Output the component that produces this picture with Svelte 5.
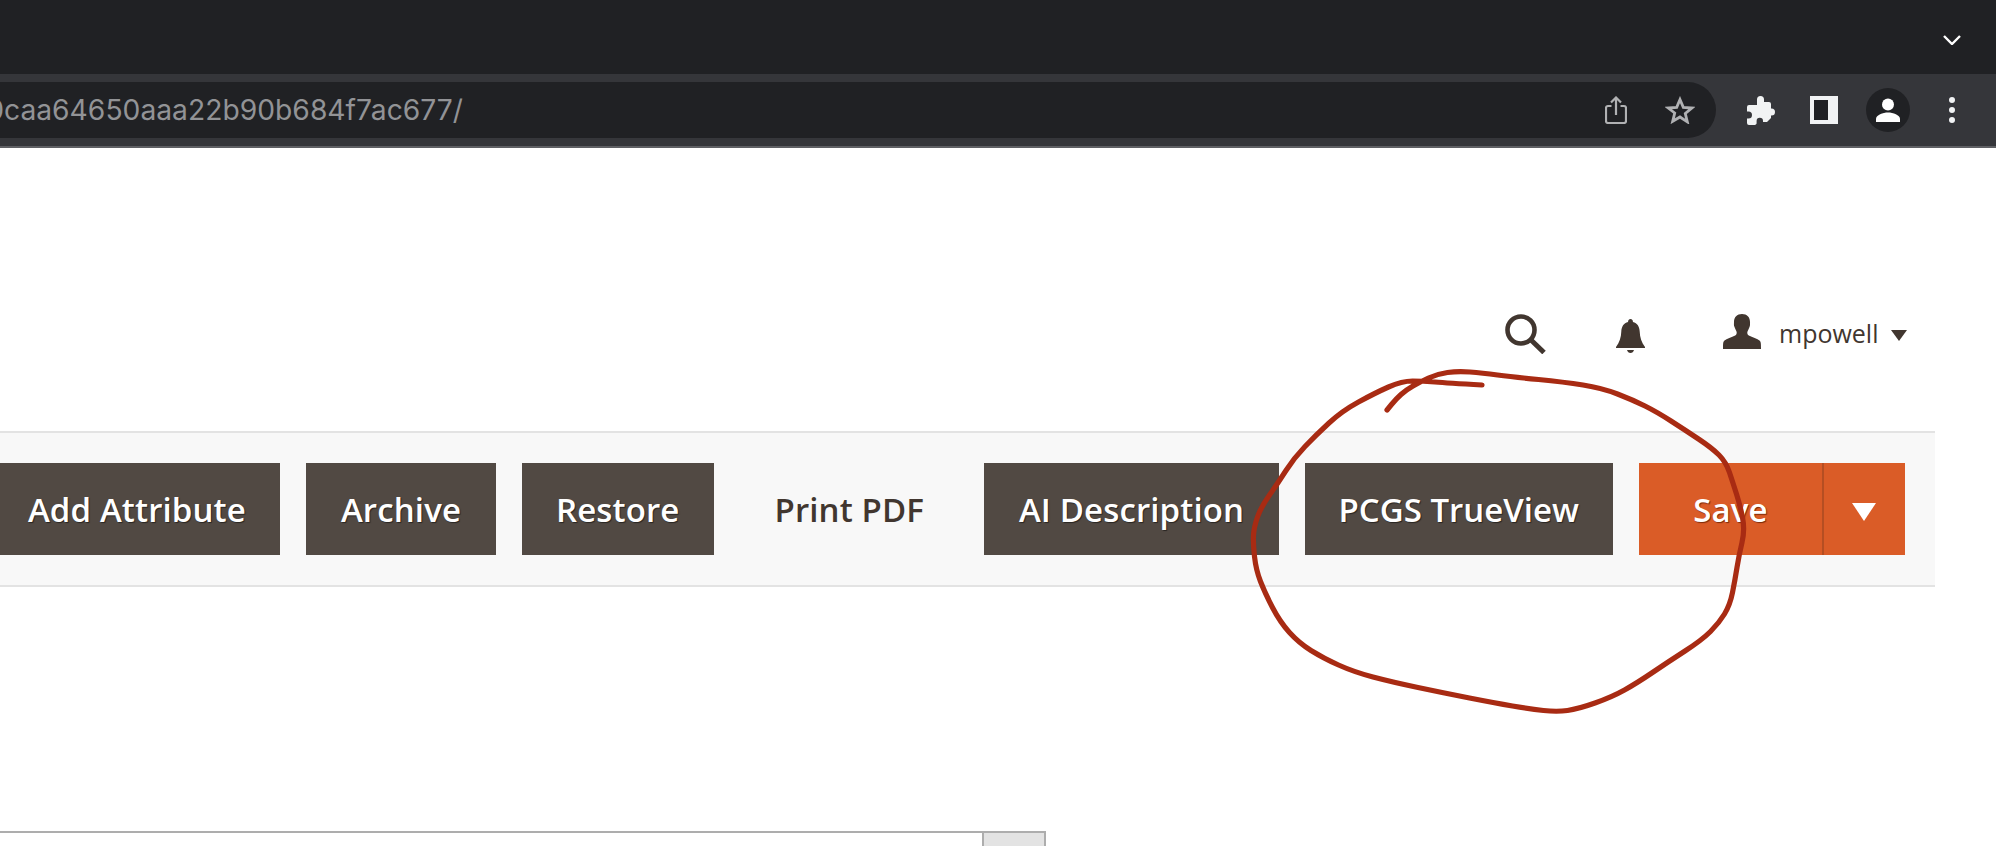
<script>
	// Red freehand circle drawn over the toolbar, in page coordinates
	const pts = [
		[1482,385],[1447,383],[1423,381],[1402,381],[1375,393],[1342,411],[1316,435],[1294,458],[1278,483],
		[1261,507],[1254,527],[1253,543],[1256,570],[1265,593],[1280,622],[1299,643],[1323,658],[1354,672],
		[1392,682],[1444,693],[1495,703],[1530,709],[1557,712],[1578,709],[1612,697],[1637,683],[1668,662],
		[1702,640],[1719,623],[1730,605],[1735,580],[1739,555],[1745,530],[1740,505],[1733,483],[1726,462],
		[1712,448],[1685,430],[1657,412],[1633,400],[1602,388],[1564,382],[1513,377],[1482,373],[1458,371],
		[1437,374],[1420,382],[1406,390],[1396,399],[1387,410]
	];

	function smooth(p) {
		let d = `M${p[0][0]} ${p[0][1]}`;
		for (let i = 1; i < p.length - 1; i++) {
			const mx = (p[i][0] + p[i + 1][0]) / 2;
			const my = (p[i][1] + p[i + 1][1]) / 2;
			d += ` Q${p[i][0]} ${p[i][1]} ${mx} ${my}`;
		}
		const last = p[p.length - 1];
		return d + ` L${last[0]} ${last[1]}`;
	}

	const circle = smooth(pts);
	const actions = ['Add Attribute', 'Archive', 'Restore'];
</script>

<div class="page">
	<div class="tabstrip">
		<svg class="chevron" width="18" height="10" viewBox="0 0 18 10"><path d="M1 1l8 8 8-8" fill="none" stroke="#fff" stroke-width="2.4"/></svg>
	</div>

	<div class="toolbar">
		<div class="omnibox">
			<div class="url"><span>f0caa64650aaa22b90b684f7ac677/</span></div>
			<svg class="share" width="22" height="28" viewBox="0 0 22 28" fill="none" stroke="#b0b1b3" stroke-width="2.2">
				<path d="M6.500 10H3a2 2 0 0 0-2 2v13a2 2 0 0 0 2 2h16a2 2 0 0 0 2-2V12a2 2 0 0 0-2-2h-3.500"/>
				<path d="M11 19V2M6 6.500 11 1.500l5 5"/>
			</svg>
			<svg class="star" width="30" height="28" viewBox="0 0 30 28"><path d="M15 3.500l3.300 7.800 8.500.7-6.500 5.500 2 8.300L15 21l-7.300 4.300 2-8.300L3.200 12l8.500-.7z" fill="none" stroke="#b0b1b3" stroke-width="2.800"/></svg>
		</div>
		<div class="tools">
			<svg class="puzzle" width="29" height="29" viewBox="0 0 29 29"><path d="M11 3.500a3.500 3.500 0 0 1 7 0V6h5a2 2 0 0 1 2 2v4.500h.5a3.500 3.500 0 0 1 0 7H25V22l-4 4h-4v-1a3.200 3.200 0 0 0-6.400 0v2.500a2 2 0 0 1-2 1.500H3a2 2 0 0 1-2-2v-4.500h1.500a3.500 3.500 0 0 0 0-7H1V11a2 2 0 0 1 2-2h8z" fill="#f1f3f4"/></svg>
			<div class="sidepanel"></div>
			<div class="avatar">
				<svg width="26" height="24" viewBox="0 0 26 24" fill="#fff"><circle cx="13" cy="6.500" r="6"/><path d="M1 24v-3c0-4 7-6.500 12-6.500s12 2.500 12 6.500v3z"/></svg>
			</div>
			<div class="dots"><i></i><i></i><i></i></div>
		</div>
	</div>
	<div class="toolbar-edge"></div>

	<header class="admin-user">
		<svg class="search" width="41" height="40" viewBox="0 0 41 40" fill="none" stroke="#41362f"><circle cx="16" cy="16" r="13.500" stroke-width="4.600"/><path d="M25.500 25.500 39 38.500" stroke-width="5"/></svg>
		<svg class="bell" width="29" height="34" viewBox="0 0 29 34" fill="#41362f">
			<path d="M14.500 0a2.500 2.500 0 0 1 2.400 3c4.500 1 6.600 4.800 6.800 9.500.2 6 1.800 11 5.300 15.500v1H0v-1c3.500-4.500 5.100-9.500 5.300-15.500C5.500 7.800 7.600 4 12.100 3a2.500 2.500 0 0 1 2.400-3z"/>
			<path d="M11 31h7c-.6 2-1.800 3-3.500 3S11.600 33 11 31z"/>
		</svg>
		<svg class="user" width="38" height="35" viewBox="0 0 38 35" fill="#41362f"><path d="M19 0c5 0 8 3 8 8 0 2 .3 3-.5 5-.6 1.600-1.300 3-1.900 4.200-.7 1.500-.3 3.300 1.200 4.200 3.500 1.800 8.500 3 11 5.300 1 1 1.200 2.300 1.200 8.300H0c0-6 .2-7.300 1.200-8.300 2.500-2.300 7.500-3.500 11-5.300 1.500-.9 1.900-2.700 1.200-4.200-.6-1.200-1.300-2.600-1.900-4.200-.8-2-.5-3-.5-5 0-5 3-8 8-8z"/></svg>
		<span class="username">mpowell</span>
		<span class="caret"></span>
	</header>

	<div class="actions">
		{#each actions as label}
			<button class="btn">{label}</button>
		{/each}
		<button class="btn plain">Print PDF</button>
		<button class="btn">AI Description</button>
		<button class="btn tight">PCGS TrueView</button>
		<div class="split">
			<button class="btn save">Save</button>
			<button class="btn toggle" aria-label="More"><span></span></button>
		</div>
	</div>

	<div class="field">
		<div class="field-input"></div>
		<div class="field-addon"></div>
	</div>

	<svg class="scribble" width="1996" height="846" viewBox="0 0 1996 846"><path d={circle} fill="none" stroke="#a82b13" stroke-width="5.200" stroke-linecap="round" stroke-linejoin="round"/></svg>
</div>

<style>
	:global(body) {
		margin: 0;
		background: #fff;
	}

	.page {
		position: relative;
		width: 1996px;
		height: 846px;
		overflow: hidden;
		font-family: "Open Sans", sans-serif;
	}

	.tabstrip {
		height: 74px;
		background: #202124;
		display: flex;
		justify-content: flex-end;
		align-items: flex-start;
		padding-right: 35px;
		box-sizing: border-box;
	}

	.chevron {
		margin-top: 35px;
	}

	.toolbar {
		height: 72px;
		background: #35363a;
		display: flex;
		align-items: center;
	}

	.toolbar-edge {
		height: 2px;
		background: #5f6064;
	}

	.omnibox {
		width: 1716px;
		height: 56px;
		background: #202124;
		border-radius: 0 28px 28px 0;
		display: flex;
		align-items: center;
		flex: none;
	}

	.url {
		width: 463px;
		display: flex;
		justify-content: flex-end;
		white-space: nowrap;
		font-family: Inter, sans-serif;
		font-size: 28.250px;
		color: #929396;
		flex: none;
	}

	.share {
		margin-left: 1142px;
	}

	.star {
		margin-left: 38px;
	}

	.tools {
		display: flex;
		align-items: center;
		margin-left: 30px;
	}

	.sidepanel {
		width: 28px;
		height: 28px;
		box-sizing: border-box;
		background: #202124;
		border: 4px solid #f1f3f4;
		border-right-width: 10px;
		margin-left: 35px;
	}

	.avatar {
		width: 44px;
		height: 44px;
		border-radius: 50%;
		background: #202124;
		display: flex;
		align-items: center;
		justify-content: center;
		margin-left: 28px;
	}

	.dots {
		display: flex;
		flex-direction: column;
		gap: 4px;
		margin-left: 39px;
	}

	.dots i {
		width: 6px;
		height: 6px;
		border-radius: 50%;
		background: #f1f3f4;
	}

	.admin-user {
		height: 283px;
		box-sizing: border-box;
		display: flex;
		justify-content: flex-end;
		align-items: flex-start;
		padding: 166px 89px 0 0;
		color: #41362f;
	}

	.bell {
		margin: 5px 0 0 70px;
	}

	.user {
		margin-left: 78px;
	}

	.username {
		font-size: 25px;
		line-height: 38px;
		margin-left: 18px;
	}

	.caret {
		margin: 16px 0 0 12.500px;
		border: 8px solid transparent;
		border-top: 11px solid #41362f;
		border-bottom: 0;
	}

	.actions {
		width: 1935px;
		height: 156px;
		box-sizing: border-box;
		display: flex;
		justify-content: flex-end;
		align-items: center;
		gap: 26px;
		padding-right: 30px;
		background: #f8f8f8;
		border-top: 2px solid #e3e3e3;
		border-bottom: 2px solid #e3e3e3;
	}

	.btn {
		height: 92px;
		padding: 0 34.500px;
		border: 0;
		background: #514943;
		color: #fff;
		font-family: "Open Sans", sans-serif;
		font-size: 33px;
		font-weight: 600;
		letter-spacing: 0.12px;
		text-shadow: 1px 1px 1px rgba(0, 0, 0, 0.5);
		white-space: nowrap;
		flex: none;
	}

	.btn.tight {
		padding: 0 34px;
		letter-spacing: 0;
	}

	.btn.plain {
		background: transparent;
		color: #41362f;
		text-shadow: none;
	}

	.split {
		display: flex;
		flex: none;
	}

	.btn.save {
		background: #da5c27;
		width: 183px;
		padding: 0;
		text-shadow: 1px 1px 1px rgba(100, 30, 0, 0.8);
	}

	.btn.toggle {
		background: #da5c27;
		width: 83px;
		padding: 0 2px 0 0;
		border-left: 2px solid #b54e22;
		display: flex;
		align-items: center;
		justify-content: center;
	}

	.toggle span {
		margin-top: 6px;
		border: 12px solid transparent;
		border-top: 18px solid #fff;
		border-bottom: 0;
	}

	.field {
		display: flex;
		width: 1046px;
		height: 40px;
		margin-top: 244px;
	}

	.field-input {
		flex: 1;
		border-top: 2px solid #adadad;
	}

	.field-addon {
		width: 64px;
		box-sizing: border-box;
		background: #e3e3e3;
		border: 2px solid #adadad;
	}

	.scribble {
		position: absolute;
		left: 0;
		top: 0;
		pointer-events: none;
	}
</style>
